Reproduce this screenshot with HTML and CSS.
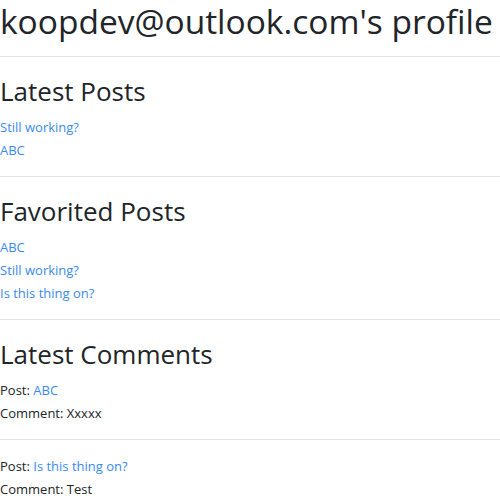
FILE: index.html
```html
<!DOCTYPE html>
<html lang="en">
<head>
<meta charset="utf-8">
<title>Profile</title>
<link rel="stylesheet" href="styles.css">
</head>
<body>
<main class="profile">
  <h1 class="profile-title">koopdev@outlook.com's profile</h1>
  <hr class="rule">
  <section class="section">
    <h2 class="section-title">Latest Posts</h2>
    <ul class="post-list">
      <li><a href="#" class="link">Still working?</a></li>
      <li><a href="#" class="link">ABC</a></li>
    </ul>
  </section>
  <hr class="rule">
  <section class="section">
    <h2 class="section-title">Favorited Posts</h2>
    <ul class="post-list">
      <li><a href="#" class="link">ABC</a></li>
      <li><a href="#" class="link">Still working?</a></li>
      <li><a href="#" class="link">Is this thing on?</a></li>
    </ul>
  </section>
  <hr class="rule">
  <section class="section">
    <h2 class="section-title">Latest Comments</h2>
    <div class="comment">
      <div class="line">Post: <a href="#" class="link">ABC</a></div>
      <div class="line">Comment: Xxxxx</div>
    </div>
    <hr class="rule">
    <div class="comment">
      <div class="line">Post: <a href="#" class="link">Is this thing on?</a></div>
      <div class="line">Comment: Test</div>
    </div>
  </section>
</main>
</body>
</html>
```
FILE: styles.css
```css
html, body {
  margin: 0;
  padding: 0;
  background: #ffffff;
}
body {
  font-family: "Open Sans", "Noto Sans", sans-serif;
  color: #212529;
  font-size: 13px;
  line-height: 23px;
}
.profile {
  padding: 0;
}
.profile-title {
  font-size: 33.5px;
  line-height: 40px;
  font-weight: 400;
  margin: 0;
  padding: 1px 0 1px;
  white-space: nowrap;
}
.rule {
  border: 0;
  border-top: 1px solid rgba(0, 0, 0, 0.1);
  margin: 13.5px 0 15.5px;
  height: 0;
}
.section-title {
  font-size: 26px;
  line-height: 34px;
  font-weight: 400;
  margin: 0 0 8px;
  padding-top: 2px;
}
.post-list {
  list-style: none;
  margin: 0;
  padding: 0;
}
.link {
  color: #3a8bf0;
  text-decoration: none;
}
.comment .line {
  margin: 0;
}
```
